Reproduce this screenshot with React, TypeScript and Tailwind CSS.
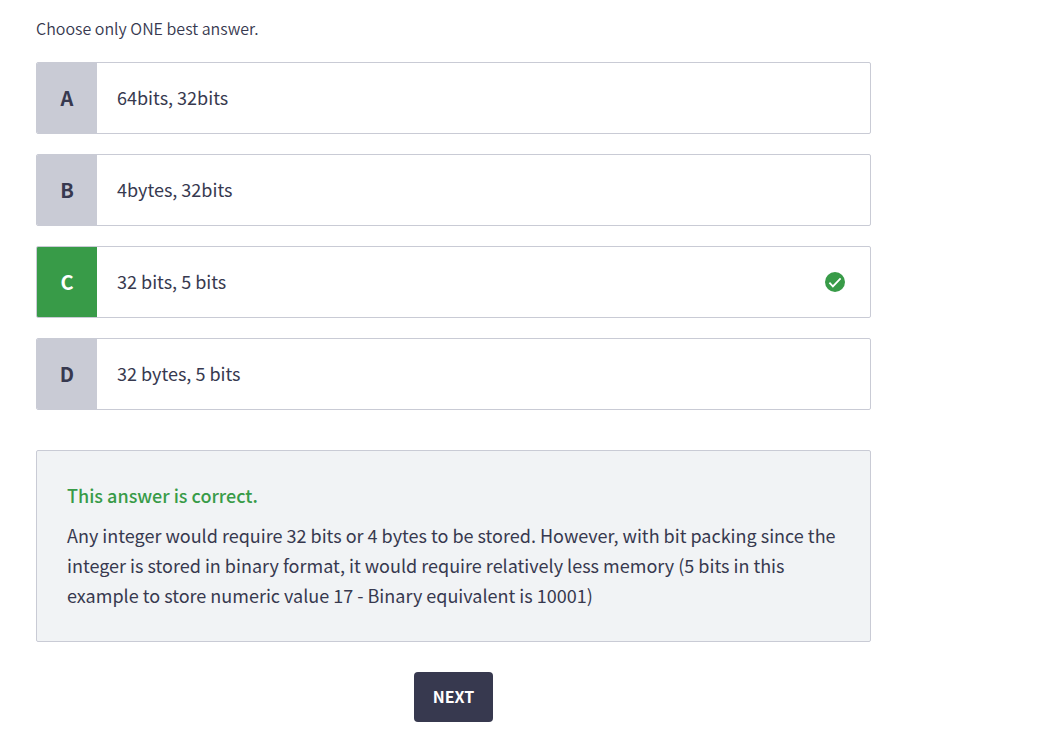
import React, { useState } from "react";

const options = [
  { id: "A", label: "64bits, 32bits" },
  { id: "B", label: "4bytes, 32bits" },
  { id: "C", label: "32 bits, 5 bits" },
  { id: "D", label: "32 bytes, 5 bits" },
];

const correctId = "C";

function CheckBadge() {
  return (
    <svg viewBox="0 0 20 20" className="size-5 shrink-0" aria-hidden="true">
      <circle cx="10" cy="10" r="10" fill="#389b48" />
      <path d="M4.4 10.7 7.9 14.4 15.6 6.4" fill="none" stroke="#fff" strokeWidth="1.8" />
    </svg>
  );
}

export default function App() {
  const [selected, setSelected] = useState("C");

  return (
    <main className="max-w-[907px] px-9 pt-[15px] font-['Noto_Sans_CJK_SC',sans-serif] text-[#37394f]">
      <fieldset>
        <legend className="mb-[21px] text-base leading-[26px] font-[350]">Choose only ONE best answer.</legend>
        <div className="flex flex-col gap-5">
          {options.map(({ id, label }) => {
            const correct = selected === id && id === correctId;
            return (
              <label
                key={id}
                className="flex h-[72px] cursor-pointer overflow-hidden rounded-xs border border-[#c9cbd5]"
              >
                <input
                  type="radio"
                  name="answer"
                  value={id}
                  checked={selected === id}
                  onChange={() => setSelected(id)}
                  className="sr-only"
                />
                <span
                  className={
                    correct
                      ? "flex w-15 shrink-0 items-center justify-center bg-[#389b48] text-xl font-bold text-white"
                      : "flex w-15 shrink-0 items-center justify-center bg-[#c9cbd5] text-xl font-bold"
                  }
                >
                  {id}
                </span>
                <span className="flex grow items-center justify-between pr-[25px] pl-5 text-lg">
                  <span className="pb-0.5">{label}</span>
                  {correct && <CheckBadge />}
                </span>
              </label>
            );
          })}
        </div>
      </fieldset>

      <section className="mt-10 rounded-xs border border-[#c9cbd5] bg-[#f1f3f5] px-[30px] pt-[29px] pb-[31px] text-lg leading-[30px]">
        <h2 className="mb-2.5 font-medium text-[#389b48]">This answer is correct.</h2>
        <p>
          Any integer would require 32 bits or 4 bytes to be stored. However, with bit packing since the integer is
          stored in binary format, it would require relatively less memory (5 bits in this example to store numeric
          value 17 - Binary equivalent is 10001)
        </p>
      </section>

      <div className="mt-[30px] flex justify-center">
        <button type="button" className="h-[50px] rounded bg-[#37394f] px-[19px] pb-0.5 text-base font-bold text-white">
          NEXT
        </button>
      </div>
    </main>
  );
}
